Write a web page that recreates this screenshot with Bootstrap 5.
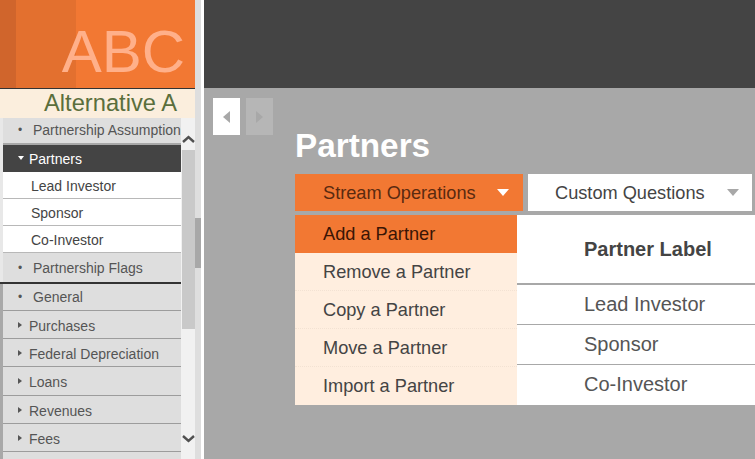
<!DOCTYPE html>
<html lang="en">
<head>
<meta charset="utf-8">
<title>Partners</title>
<link href="https://cdn.jsdelivr.net/npm/bootstrap@5.3.0/dist/css/bootstrap.min.css" rel="stylesheet">
<style>
html,body{height:459px;overflow:hidden}
body{font-family:"Liberation Sans",Arial,sans-serif;background:#a8a8a8;color:#444}
.shell{width:755px;height:459px}
.side{width:195px;flex:none;background:#a8a8a8}
.gutter{width:9px;flex:none;position:relative;background:linear-gradient(90deg,#dedede 0,#dedede 6px,#fff 6px)}
.gthumb{position:absolute;left:0;width:6px;top:218px;height:50px;background:#a8a8a8}
.brand{height:89px;background:linear-gradient(90deg,#d0652c 0,#d0652c 16px,#e3702f 16px,#e3702f 76px,#f27833 76px);border-bottom:1px solid #333;overflow:hidden;font-size:60px;line-height:1;color:#ffb08a;padding-right:10px;padding-top:22px}
.alt{height:29px;background:#fbeedd;color:#5a6e3c;font-size:23.7px;line-height:28px;padding-right:18px}
.menuwrap{height:341px;overflow:hidden;background:linear-gradient(180deg,#e8e8e8 0,#e8e8e8 164px,#333 164px,#333 166px,#a8a8a8 166px)}
.menu{width:178px;margin-left:3px;flex:none;font-size:14px}
.mi{height:28.3px;line-height:28px;padding-top:1px;background:#dedede;border-bottom:1px solid #9c9c9c;white-space:nowrap;overflow:hidden;color:#555;display:flex}
.mark-i{width:26px;flex:none;font-size:12px;padding-left:15px}
.mi.top .mark-i{width:30px}
.mi.first{height:27px;line-height:25px;padding-top:0;border-bottom:2px solid #a8a8a8}
.mi.sel{background:#444;color:#fff;height:27px;border-bottom:0;line-height:27px}
.mi.sel .tri-d{margin-top:10px}
.mi.sub{background:#fff;color:#444;height:27px;border-bottom:1px solid #b8b8b8;padding-left:28px;line-height:27px}
.mi.flag{height:31px;line-height:29px;border-bottom:2px solid #333}
.mi.gen{height:26.8px;line-height:26px;padding-top:0}
.tri-r{width:0;height:0;border-left:4px solid #555;border-top:3px solid transparent;border-bottom:3px solid transparent;margin:10px 0 0 15px}
.tri-d{width:0;height:0;border-top:4px solid #fff;border-left:3px solid transparent;border-right:3px solid transparent;margin:11px 0 0 15px}
.tw{width:26px;flex:none}
.bar{width:14px;flex:none;background:#f1f1f1;position:relative}
.thumb{position:absolute;left:1px;right:0;top:32px;height:179px;background:#c9c9c9}
.arr{position:absolute;left:1px;width:13px;height:8px}
.top-dark{height:88px;background:#444}
.main{flex:1;min-width:0}
.pager{padding:10px 0 0 9px;gap:6px}
.pg{width:27px;height:37px;background:#fff;display:flex;align-items:center;justify-content:center}
.pg.off{background:#b6b6b6}
.pg.on i{border-right:7px solid #a8a8a8;border-top:6px solid transparent;border-bottom:6px solid transparent}
.pg.off i{border-left:7px solid #a8a8a8;border-top:6px solid transparent;border-bottom:6px solid transparent}
.pg i{display:block;width:0;height:0}
.title{font-size:33.3px;font-weight:700;color:#fff;line-height:37px;margin:0;padding-left:91px;margin-top:-8px}
.tabs{padding:10px 0 0 91px;gap:5px}
.tb{height:37px;font-size:18.2px;line-height:37px;display:flex;align-items:center;padding-left:28px}
.tb span{padding-top:1px}
.tb.a{width:228px;background:#f27833;color:#5a2a10}
.tb.b{width:224px;background:#fff;color:#444;padding-left:27px}
.tb span{flex:1}
.car{width:0;height:0;border-left:6px solid transparent;border-right:6px solid transparent;border-top:7px solid #fff;margin-right:14px}
.tb.b .car{border-top-color:#a8a8a8;margin-right:13px}
.body-row{position:relative;margin:4px 0 0 91px;height:190px}
.tablish{position:absolute;left:222px;top:0;right:0;background:#fff;height:190px}
.lbl-h{height:70px;line-height:68px;padding-left:67px;font-size:20px;font-weight:700;color:#444;border-bottom:2px solid #a8a8a8}
.lbl{height:40px;line-height:39px;padding-left:67px;font-size:20px;border-bottom:1px solid #a8a8a8;color:#555}
.lbl:last-child{border-bottom:0}
.drop{position:absolute;left:0;top:0;width:222px;z-index:2;background:#ffeedf;font-size:18.2px}
.dr{height:38px;line-height:38px;padding-left:28px;color:#444;border-bottom:1px dotted #f3e2d3}
.dr:last-child{border-bottom:0}
.dr.hot{background:#f27833;color:#3a1505;border-bottom:0}
</style>
</head>
<body>
<div class="shell d-flex">
  <div class="side">
    <div class="brand text-end">ABC</div>
    <div class="alt text-end">Alternative A</div>
    <div class="menuwrap d-flex">
      <div class="menu">
        <div class="mi top first"><span class="mark-i">•</span>Partnership Assumption</div>
        <div class="mi sel"><span class="tw"><span class="tri-d d-block"></span></span>Partners</div>
        <div class="mi sub">Lead Investor</div>
        <div class="mi sub">Sponsor</div>
        <div class="mi sub">Co-Investor</div>
        <div class="mi top flag"><span class="mark-i">•</span>Partnership Flags</div>
        <div class="mi top gen"><span class="mark-i">•</span>General</div>
        <div class="mi"><span class="tw"><span class="tri-r d-block"></span></span>Purchases</div>
        <div class="mi"><span class="tw"><span class="tri-r d-block"></span></span>Federal Depreciation</div>
        <div class="mi"><span class="tw"><span class="tri-r d-block"></span></span>Loans</div>
        <div class="mi"><span class="tw"><span class="tri-r d-block"></span></span>Revenues</div>
        <div class="mi"><span class="tw"><span class="tri-r d-block"></span></span>Fees</div>
        <div class="mi"></div>
      </div>
      <div class="bar">
        <div class="thumb"></div>
        <svg class="arr" style="top:17px" viewBox="0 0 13 8"><path d="M1 7l5.500-5 5.500 5" fill="none" stroke="#505050" stroke-width="2.4"/></svg>
        <svg class="arr" style="top:317px" viewBox="0 0 13 8"><path d="M1 1l5.500 5 5.500-5" fill="none" stroke="#505050" stroke-width="2.4"/></svg>
      </div>
    </div>
  </div>
  <div class="gutter"><div class="gthumb"></div></div>
  <div class="main">
    <div class="top-dark"></div>
    <div class="pager d-flex">
      <div class="pg on"><i></i></div>
      <div class="pg off"><i></i></div>
    </div>
    <h1 class="title">Partners</h1>
    <div class="tabs d-flex">
      <div class="tb a"><span>Stream Operations</span><i class="car"></i></div>
      <div class="tb b"><span>Custom Questions</span><i class="car"></i></div>
    </div>
    <div class="body-row">
      <div class="drop">
        <div class="dr hot">Add a Partner</div>
        <div class="dr">Remove a Partner</div>
        <div class="dr">Copy a Partner</div>
        <div class="dr">Move a Partner</div>
        <div class="dr">Import a Partner</div>
      </div>
      <div class="tablish">
        <div class="lbl-h">Partner Label</div>
        <div class="lbl">Lead Investor</div>
        <div class="lbl">Sponsor</div>
        <div class="lbl">Co-Investor</div>
      </div>
    </div>
  </div>
</div>
<script src="https://cdn.jsdelivr.net/npm/bootstrap@5.3.0/dist/js/bootstrap.bundle.min.js"></script>
</body>
</html>
